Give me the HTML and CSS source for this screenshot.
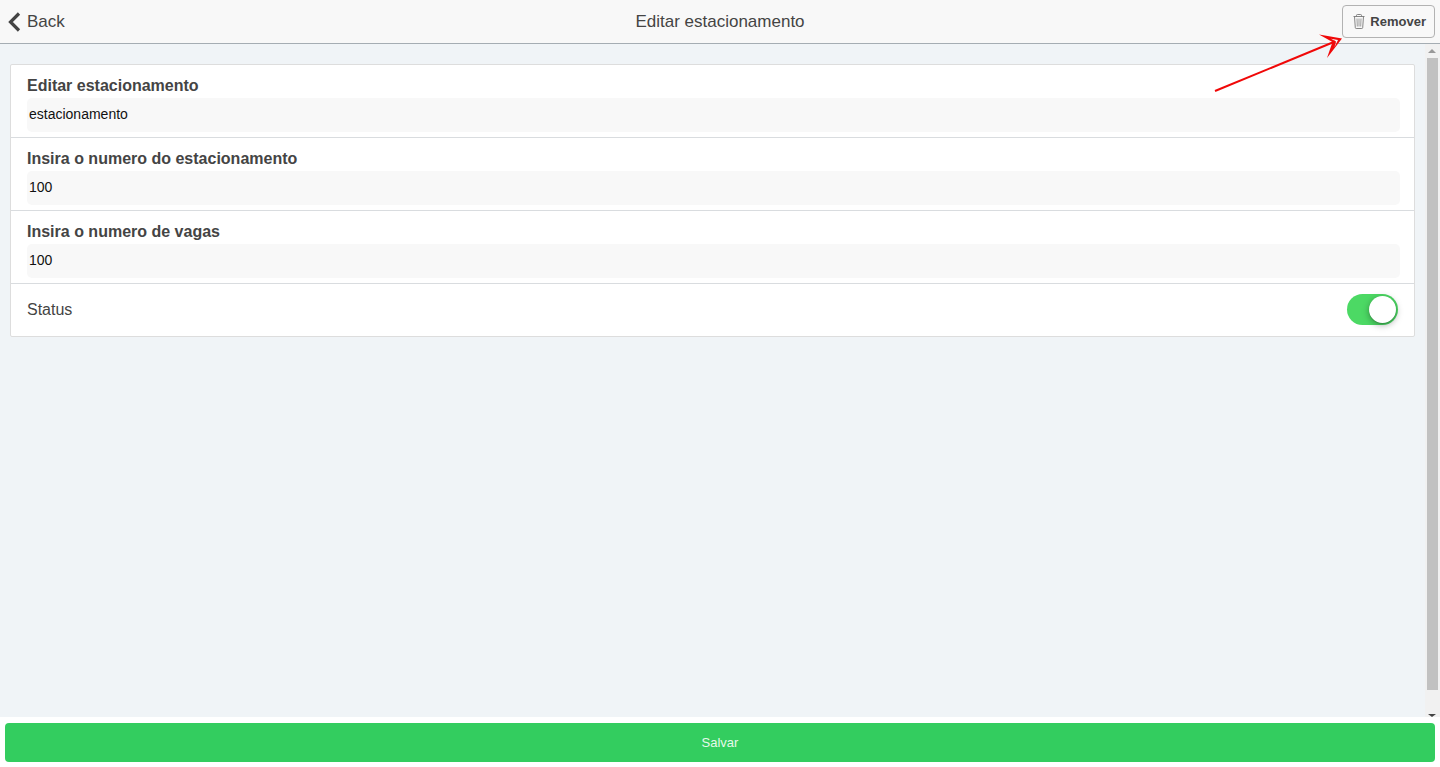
FILE: index.html
```
<!DOCTYPE html>
<html lang="pt-BR">
<head>
  <meta charset="UTF-8" />
  <meta name="viewport" content="width=device-width, initial-scale=1.0"/>
  <title>Editar estacionamento</title>
  <link rel="stylesheet" href="styles.css">
</head>
<body>

  <!-- HEADER -->
  <header class="bar">
    <button class="back" type="button">
      <svg width="14" height="20" viewBox="0 0 14 20" aria-hidden="true">
        <path d="M12 1.5 L3.5 10 L12 18.5" fill="none" stroke="#444" stroke-width="3.2"/>
      </svg>
      Back
    </button>
    <h1 class="title">Editar estacionamento</h1>
    <button class="remove" type="button">
      <svg width="12" height="16" viewBox="0 0 12 16" fill="none" stroke="#777" stroke-width="0.9" aria-hidden="true">
        <path d="M0.5 2.5 H11.5 M3.5 2.5 V1.3 Q3.5 0.5 4.5 0.5 H7.5 Q8.5 0.5 8.5 1.3 V2.5"/>
        <path d="M1.5 2.5 L2.3 13.7 Q2.4 14.5 3.2 14.5 H8.8 Q9.6 14.5 9.7 13.7 L10.5 2.5"/>
        <path d="M6 4.5 V12.5 M4 4.5 L4.3 12.5 M8 4.5 L7.7 12.5" stroke-width="0.7"/>
      </svg>
      Remover
    </button>
    <svg class="arrow" width="130" height="62" viewBox="0 0 130 62" aria-hidden="true">
      <path d="M2 57 L122 7.5" fill="none" stroke="#f00808" stroke-width="2"/>
      <path d="M129 4.5 L106 0.5 L119.5 8 L114 24 Z M125 6 L121.5 13 L123 7.5 L118 4.8 Z" fill="#f00808" fill-rule="evenodd"/>
    </svg>
  </header>

  <!-- FORM -->
  <main class="content">
    <form class="list" id="editForm">
      <div class="item">
        <label for="nome">Editar estacionamento</label>
        <input type="text" id="nome" value="estacionamento" />
      </div>
      <div class="item">
        <label for="numero">Insira o numero do estacionamento</label>
        <input type="text" id="numero" value="100" />
      </div>
      <div class="item">
        <label for="vagas">Insira o numero de vagas</label>
        <input type="text" id="vagas" value="100" />
      </div>
      <div class="item-toggle">
        <label for="status">Status</label>
        <input class="toggle" type="checkbox" id="status" checked />
      </div>
    </form>
    <div class="scrollbar" aria-hidden="true">
      <span class="arrow-up"></span>
      <span class="thumb"></span>
      <span class="arrow-down"></span>
    </div>
  </main>

  <footer class="footer">
    <button class="save" type="submit" form="editForm">Salvar</button>
  </footer>

</body>
</html>
```
FILE: styles.css
```
* {
  box-sizing: border-box;
}
body {
  display: flex;
  flex-direction: column;
  height: 100vh;
  margin: 0;
  background: white;
  color: #444;
  font-family: "Liberation Sans", Arial, sans-serif;
}
button, input {
  font-family: inherit;
}
.bar {
  position: relative;
  display: grid;
  grid-template-columns: 1fr auto 1fr;
  align-items: center;
  height: 44px;
  padding: 0 5px;
  background: #f8f8f8;
  border-bottom: 1px solid #a5adb3;
}
.back {
  display: flex;
  align-items: center;
  justify-self: start;
  gap: 6px;
  padding: 0 2px;
  border: none;
  background: none;
  color: #444;
  font-size: 17px;
  cursor: pointer;
}
.title {
  margin: 0;
  font-size: 17px;
  font-weight: normal;
}
.remove {
  display: flex;
  align-items: center;
  justify-self: end;
  gap: 5px;
  height: 33px;
  padding: 0 8px 0 10px;
  border: 1px solid #b2b2b2;
  border-radius: 4px;
  background: #f8f8f8;
  color: #444;
  font-size: 13px;
  font-weight: bold;
  cursor: pointer;
}
.arrow {
  position: absolute;
  top: 34px;
  right: 97px;
  pointer-events: none;
}
.content {
  display: flex;
  flex: 1;
  min-height: 0;
  background: #f0f4f7;
}
.list {
  flex: 1;
  align-self: flex-start;
  margin: 20px 10px;
  background: white;
  border: 1px solid #ddd;
  border-radius: 2px;
}
.item {
  padding: 11px 14px 5px 16px;
  border-bottom: 1px solid #d9dcdf;
}
.item label {
  display: block;
  margin-bottom: 2px;
  font-size: 16px;
  font-weight: bold;
  line-height: 20px;
}
.item input {
  display: block;
  width: 100%;
  height: 34px;
  padding: 0 2px 2px;
  border: none;
  border-radius: 5px;
  background: #f8f8f8;
  color: #111;
  font-size: 14px;
}
.item-toggle {
  display: flex;
  align-items: flex-start;
  justify-content: space-between;
  padding: 10px 16px 11px;
  font-size: 16px;
  line-height: 31px;
}
.toggle {
  appearance: none;
  display: flex;
  width: 51px;
  height: 31px;
  margin: 0;
  padding: 2px;
  border-radius: 16px;
  background: #ccc;
  cursor: pointer;
}
.toggle::before {
  content: "";
  width: 27px;
  height: 27px;
  border-radius: 50%;
  background: white;
  box-shadow: 0 2px 7px rgba(0,0,0,0.35), 0 1px 1px rgba(0,0,0,0.15);
}
.toggle:checked {
  justify-content: flex-end;
  background: #4cd964;
}
.scrollbar {
  display: flex;
  flex-direction: column;
  align-items: center;
  width: 15px;
  padding-top: 5px;
  background: #f1f1f1;
}
.arrow-up, .arrow-down {
  margin-right: 1px;
  border: 4px solid transparent;
}
.arrow-up {
  border-top: none;
  border-bottom-color: #999;
}
.thumb {
  flex: 1;
  width: 11px;
  margin: 5px 0 24px;
  background: #c1c1c1;
}
.arrow-down {
  border-bottom: none;
  border-top: 3px solid #444;
}
.footer {
  display: flex;
  padding: 6px 5px 5px;
}
.save {
  flex: 1;
  height: 39px;
  border: none;
  border-radius: 4px;
  background: #33cd5f;
  color: #e6f9eb;
  font-size: 13px;
  cursor: pointer;
}
```
